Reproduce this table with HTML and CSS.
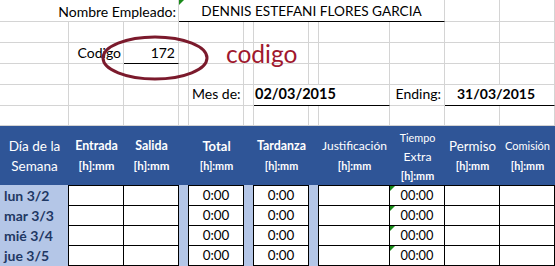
FILE: index.html
```html
<!DOCTYPE html>
<html lang="es">
<head>
<meta charset="utf-8">
<title>Control de asistencia</title>
<link rel="stylesheet" href="styles.css">
</head>
<body>
<div class="sheet">
  <!-- row 1 -->
  <div class="c s3 right lbl-name">Nombre Empleado:</div>
  <div class="c s7 center ul tri name">DENNIS ESTEFANI FLORES GARCIA</div>
  <div class="c"></div><div class="c"></div>
  <!-- row 2 -->
  <div class="c"></div><div class="c"></div><div class="c"></div><div class="c"></div><div class="c"></div><div class="c"></div>
  <div class="c"></div><div class="c"></div><div class="c"></div><div class="c"></div><div class="c"></div><div class="c"></div>
  <!-- row 3 -->
  <div class="c"></div>
  <div class="c right pr2 r3">Codigo</div>
  <div class="c right pr3 ul r3">172</div>
  <div class="c"></div><div class="c"></div><div class="c"></div><div class="c"></div><div class="c"></div><div class="c"></div>
  <div class="c"></div><div class="c"></div><div class="c"></div>
  <!-- row 4 -->
  <div class="c"></div><div class="c"></div><div class="c"></div><div class="c"></div><div class="c"></div><div class="c"></div>
  <div class="c"></div><div class="c"></div><div class="c"></div><div class="c"></div><div class="c"></div><div class="c"></div>
  <!-- row 5 -->
  <div class="c"></div><div class="c"></div><div class="c"></div><div class="c"></div>
  <div class="c r5 pl3">Mes de:</div>
  <div class="c"></div>
  <div class="c s3 ul r5 date d1">02/03/2015</div>
  <div class="c right r5 pr3">Ending:</div>
  <div class="c s2 ul r5 date d2">31/03/2015</div>
  <!-- row 6 -->
  <div class="c"></div><div class="c"></div><div class="c"></div><div class="c"></div><div class="c"></div><div class="c"></div>
  <div class="c"></div><div class="c"></div><div class="c"></div><div class="c"></div><div class="c"></div><div class="c"></div>

  <!-- header -->
  <div class="h"><span class="h-dia">Día de la</span><span class="h-dia">Semana</span></div>
  <div class="h"><span class="h-b">Entrada</span><span class="h-u big">[h]:mm</span></div>
  <div class="h"><span class="h-b">Salida</span><span class="h-u big">[h]:mm</span></div>
  <div class="h"></div>
  <div class="h"><span class="h-total">Total</span><span class="h-u">[h]:mm</span></div>
  <div class="h"></div>
  <div class="h"><span class="h-b">Tardanza</span><span class="h-u">[h]:mm</span></div>
  <div class="h"></div>
  <div class="h"><span class="h-just">Justificación</span><span class="h-u">[h]:mm</span></div>
  <div class="h three"><span class="h-tiempo">Tiempo</span><span class="h-extra">Extra</span><span class="h-u">[h]:mm</span></div>
  <div class="h"><span class="h-perm">Permiso</span><span class="h-u">[h]:mm</span></div>
  <div class="h"><span class="h-com">Comisión</span><span class="h-u">[h]:mm</span></div>

  <!-- data row 1 -->
  <div class="lb day">lun 3/2</div>
  <div class="w top"></div><div class="w top"></div>
  <div class="lb"></div>
  <div class="w top num">0:00</div>
  <div class="lb"></div>
  <div class="w top num">0:00</div>
  <div class="lb"></div>
  <div class="w top"></div>
  <div class="w top num tri ext">00:00</div>
  <div class="w top"></div><div class="w top"></div>
  <!-- data row 2 -->
  <div class="lb day">mar 3/3</div>
  <div class="w"></div><div class="w"></div>
  <div class="lb"></div>
  <div class="w num">0:00</div>
  <div class="lb"></div>
  <div class="w num">0:00</div>
  <div class="lb"></div>
  <div class="w"></div>
  <div class="w num tri ext">00:00</div>
  <div class="w"></div><div class="w"></div>
  <!-- data row 3 -->
  <div class="lb day">mié 3/4</div>
  <div class="w"></div><div class="w"></div>
  <div class="lb"></div>
  <div class="w num">0:00</div>
  <div class="lb"></div>
  <div class="w num">0:00</div>
  <div class="lb"></div>
  <div class="w"></div>
  <div class="w num tri ext">00:00</div>
  <div class="w"></div><div class="w"></div>
  <!-- data row 4 -->
  <div class="lb day">jue 3/5</div>
  <div class="w"></div><div class="w"></div>
  <div class="lb"></div>
  <div class="w num">0:00</div>
  <div class="lb"></div>
  <div class="w num">0:00</div>
  <div class="lb"></div>
  <div class="w"></div>
  <div class="w num tri ext">00:00</div>
  <div class="w"></div><div class="w"></div>

  <!-- floating shapes -->
  <svg class="oval" width="112" height="50" viewBox="0 0 112 50" aria-hidden="true">
    <ellipse cx="55" cy="24" rx="52" ry="21" fill="none" stroke="#7b1a2c" stroke-width="3"/>
  </svg>
  <div class="note">codigo</div>
</div>
</body>
</html>
```

FILE: styles.css
```css
* { box-sizing: border-box; margin: 0; padding: 0; }

html, body {
  width: 555px;
  height: 266px;
  overflow: hidden;
  background: #ffffff;
}

body {
  font-family: Lato, "Open Sans", sans-serif;
  color: #000000;
}

.sheet {
  position: relative;
  display: grid;
  grid-template-columns: 69px 55px 55px 10px 55px 10px 55px 10px 71px 55px 55px 55px;
  grid-template-rows: 22px 21px 21px 21px 21px 20px 59px 21px 20px 20px 20px;
}

/* worksheet cells with gridlines */
.c {
  border-right: 1px solid #d4d4d4;
  border-bottom: 1px solid #d4d4d4;
  display: flex;
  align-items: flex-end;
  font-size: 14px;
  line-height: 15px;
  padding-bottom: 2px;
  white-space: nowrap;
  position: relative;
}

.s2 { grid-column: span 2; }
.s3 { grid-column: span 3; }
.s7 { grid-column: span 7; }

.right { justify-content: flex-end; }
.center { justify-content: center; }
.pr2 { padding-right: 2px; }
.pr3 { padding-right: 3px; }
.pl3 { padding-left: 3px; }

.lbl-name { padding-right: 2px; }
.name { font-size: 13.6px; }

.ul { border-bottom-color: #000000; }

.r3 { padding-bottom: 3px; }
.r5 { padding-bottom: 4px; }

.date { font-weight: 700; font-size: 14px; }
.d1 { padding-left: 1px; font-size: 14.5px; }
.d2 { padding-left: 12px; }

/* excel error indicator */
.tri::before {
  content: "";
  position: absolute;
  left: 0;
  top: 0;
  width: 0;
  height: 0;
  border-top: 5px solid #1a8a1a;
  border-right: 5px solid transparent;
}

/* header band */
.h {
  background: #2f5597;
  color: #ffffff;
  display: flex;
  flex-direction: column;
  align-items: center;
  justify-content: center;
  text-align: center;
  line-height: 20px;
  white-space: nowrap;
  padding-top: 1px;
}
.h.three { line-height: 19px; }

.h-dia { font-size: 13.5px; }
.h-b { font-size: 12.4px; font-weight: 700; }
.h-total { font-size: 13px; font-weight: 700; }
.h-u { font-size: 10.8px; font-weight: 700; }
.h-u.big { font-size: 11.6px; }
.h-just { font-size: 12px; }
.h-tiempo { font-size: 10.8px; }
.h-extra { font-size: 12.2px; }
.h-perm { font-size: 13.3px; }
.h-com { font-size: 11px; }

/* data rows */
.lb {
  background: #b4c6e7;
  border-right: 1px solid #000000;
}

.w {
  background: #ffffff;
  border-right: 1px solid #000000;
  border-bottom: 1px solid #000000;
  position: relative;
}
.w.top { border-top: 1px solid #000000; }

.day {
  color: #1f3864;
  font-weight: 700;
  font-size: 14px;
  line-height: 15px;
  display: flex;
  align-items: flex-end;
  padding-left: 4px;
  padding-bottom: 3px;
  white-space: nowrap;
}

.num {
  display: flex;
  align-items: flex-end;
  justify-content: center;
  font-size: 13.4px;
  line-height: 15px;
  padding-bottom: 2px;
}
.ext { font-size: 12.8px; }

/* floating drawing objects */
.oval {
  position: absolute;
  left: 100px;
  top: 34px;
}

.note {
  position: absolute;
  left: 226px;
  top: 42px;
  font-size: 24.5px;
  line-height: 1;
  color: #a0182e;
  white-space: nowrap;
}
```
